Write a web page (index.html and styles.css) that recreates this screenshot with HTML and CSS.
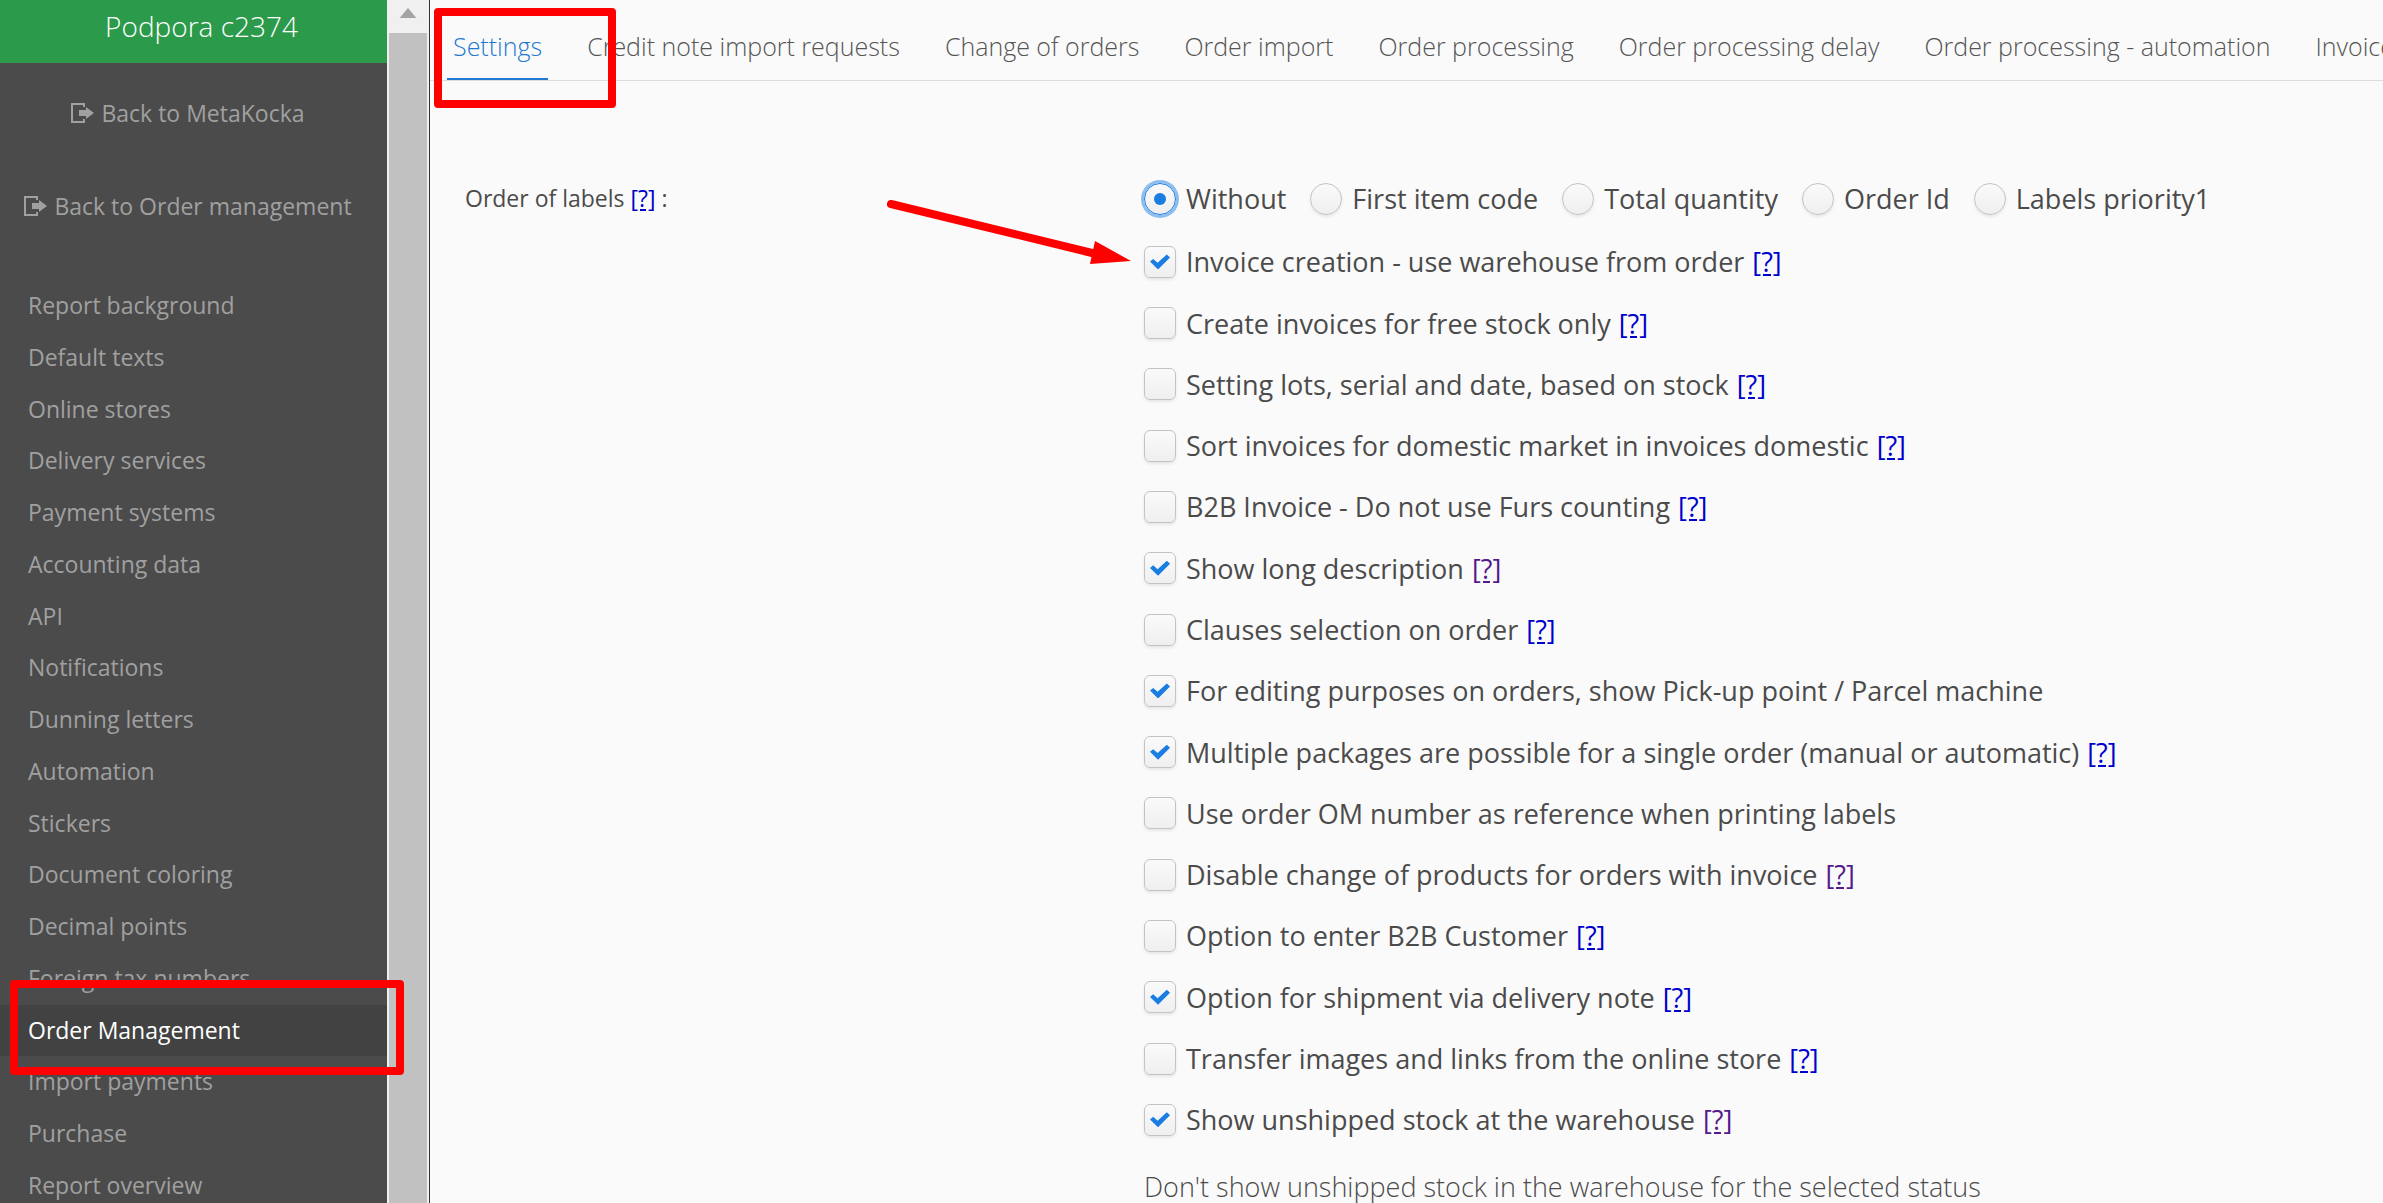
FILE: index.html
```
<!DOCTYPE html>
<html lang="en">
<head>
  <meta charset="UTF-8" />
  <meta name="viewport" content="width=device-width, initial-scale=1.0"/>
  <title>Order Management - Settings</title>
  <link rel="stylesheet" href="styles.css">
</head>
<body>
  <svg class="symbols" width="0" height="0">
    <symbol id="exit" viewBox="0 0 24 22">
      <path d="M14 5V2H2v18h12v-3" fill="none" stroke="currentColor" stroke-width="2"/>
      <path d="M9 8h7V5l8 6-8 6v-3H9z" fill="currentColor"/>
    </symbol>
  </svg>

  <!-- Sidebar -->
  <aside class="sidebar">
    <div class="account">Podpora c2374</div>
    <a class="back" href="#"><svg class="exit-icon"><use href="#exit"/></svg>Back to MetaKocka</a>
    <a class="back" href="#"><svg class="exit-icon"><use href="#exit"/></svg>Back to Order management</a>
    <nav class="menu">
      <a href="#">Report background</a>
      <a href="#">Default texts</a>
      <a href="#">Online stores</a>
      <a href="#">Delivery services</a>
      <a href="#">Payment systems</a>
      <a href="#">Accounting data</a>
      <a href="#">API</a>
      <a href="#">Notifications</a>
      <a href="#">Dunning letters</a>
      <a href="#">Automation</a>
      <a href="#">Stickers</a>
      <a href="#">Document coloring</a>
      <a href="#">Decimal points</a>
      <a href="#">Foreign tax numbers</a>
      <a href="#" class="active">Order Management</a>
      <a href="#">Import payments</a>
      <a href="#">Purchase</a>
      <a href="#">Report overview</a>
    </nav>
    <div class="mark mark-menu"></div>
  </aside>

  <div class="scrollbar">
    <svg class="scroll-up" viewBox="0 0 20 12"><path d="M0 12L10 0l10 12z" fill="#a3a3a3"/></svg>
    <div class="scroll-thumb"></div>
  </div>

  <!-- Content -->
  <main class="content">
    <nav class="tabs">
      <a href="#" class="active">Settings</a>
      <a href="#">Credit note import requests</a>
      <a href="#">Change of orders</a>
      <a href="#">Order import</a>
      <a href="#">Order processing</a>
      <a href="#">Order processing delay</a>
      <a href="#">Order processing - automation</a>
      <a href="#">Invoices</a>
    </nav>
    <div class="mark mark-tab"></div>

    <form class="form">
      <div class="caption">Order of labels <a href="#">[?]</a> :</div>
      <div class="fields">
        <div class="radios">
          <label><input type="radio" name="labels" class="focused" checked>Without</label>
          <label><input type="radio" name="labels">First item code</label>
          <label><input type="radio" name="labels">Total quantity</label>
          <label><input type="radio" name="labels">Order Id</label>
          <label><input type="radio" name="labels">Labels priority1</label>
        </div>
        <div class="check">
          <label><input type="checkbox" checked>Invoice creation - use warehouse from order</label>
          <a href="#">[?]</a>
          <svg class="arrow" viewBox="0 0 250 70">
            <path d="M9 9L210 58" stroke="#f00" stroke-width="8" stroke-linecap="round"/>
            <path d="M213 46l36 20-41 3z" fill="#f00"/>
          </svg>
        </div>
        <div class="check"><label><input type="checkbox">Create invoices for free stock only</label> <a href="#">[?]</a></div>
        <div class="check"><label><input type="checkbox">Setting lots, serial and date, based on stock</label> <a href="#">[?]</a></div>
        <div class="check"><label><input type="checkbox">Sort invoices for domestic market in invoices domestic</label> <a href="#">[?]</a></div>
        <div class="check"><label><input type="checkbox">B2B Invoice - Do not use Furs counting</label> <a href="#">[?]</a></div>
        <div class="check"><label><input type="checkbox" checked>Show long description</label> <a href="#" class="seen">[?]</a></div>
        <div class="check"><label><input type="checkbox">Clauses selection on order</label> <a href="#">[?]</a></div>
        <div class="check"><label><input type="checkbox" checked>For editing purposes on orders, show Pick-up point / Parcel machine</label></div>
        <div class="check"><label><input type="checkbox" checked>Multiple packages are possible for a single order (manual or automatic)</label> <a href="#">[?]</a></div>
        <div class="check"><label><input type="checkbox">Use order OM number as reference when printing labels</label></div>
        <div class="check"><label><input type="checkbox">Disable change of products for orders with invoice</label> <a href="#" class="seen">[?]</a></div>
        <div class="check"><label><input type="checkbox">Option to enter B2B Customer</label> <a href="#">[?]</a></div>
        <div class="check"><label><input type="checkbox" checked>Option for shipment via delivery note</label> <a href="#">[?]</a></div>
        <div class="check"><label><input type="checkbox">Transfer images and links from the online store</label> <a href="#">[?]</a></div>
        <div class="check"><label><input type="checkbox" checked>Show unshipped stock at the warehouse</label> <a href="#" class="seen">[?]</a></div>
        <p class="note">Don't show unshipped stock in the warehouse for the selected status</p>
      </div>
    </form>
  </main>
</body>
</html>
```
FILE: styles.css
```
* {
  box-sizing: border-box;
}

body {
  margin: 0;
  height: 100vh;
  display: flex;
  overflow: hidden;
  font-family: "Open Sans", sans-serif;
  font-size: 23px;
  color: #4b4b4b;
  background: #fafafa;
}

.symbols {
  position: absolute;
}

/* Sidebar */
.sidebar {
  position: relative;
  flex: 0 0 387px;
  height: 100%;
  background: #4b4b4b;
}

.account {
  height: 63px;
  padding-left: 16px;
  line-height: 53px;
  text-align: center;
  font-size: 28px;
  font-weight: 300;
  color: #fff;
  background: #2b9a4b;
}

.sidebar a {
  color: #a0a0a0;
  text-decoration: none;
}

.back {
  display: flex;
  align-items: center;
  justify-content: center;
  gap: 7px;
  height: 93px;
  padding: 6px 12px 0 0;
}

.exit-icon {
  width: 24px;
  height: 22px;
}

.menu {
  display: flex;
  flex-direction: column;
  padding-top: 31px;
}

.menu a {
  padding-left: 28px;
  line-height: 2.25;
}

.sidebar .active {
  color: #fff;
  background: #424242;
}

/* Scrollbar */
.scrollbar {
  flex: 0 0 43px;
  display: flex;
  flex-direction: column;
  align-items: center;
  height: 100%;
  background: #f0f0f0;
  border-right: 1px solid #333;
}

.scroll-up {
  width: 20px;
  height: 10px;
  margin: 8px 0 15px;
}

.scroll-thumb {
  flex: 1;
  width: 38px;
  background: #c1c1c1;
}

/* Content */
.content {
  position: relative;
  flex: 1;
  min-width: 0;
}

.tabs {
  display: flex;
  gap: 33px;
  height: 81px;
  padding-left: 17px;
  overflow: hidden;
  border-bottom: 1px solid #ddd;
}

.tabs a {
  height: 81px;
  padding: 0 6px;
  line-height: 93px;
  white-space: nowrap;
  font-size: 25px;
  font-weight: 300;
  color: #555;
  text-decoration: none;
}

.tabs .active {
  color: #2378d0;
  border-bottom: 3px solid #2378d0;
}

.form {
  display: grid;
  grid-template-columns: 679px 1fr;
  padding: 87px 0 0 35px;
}

.caption {
  line-height: 60px;
}

.form a {
  color: #00c;
}

.form .seen {
  color: #551a8b;
}

.fields {
  font-size: 27px;
  line-height: 2.27;
  white-space: nowrap;
}

.radios {
  display: flex;
  gap: 24px;
  margin-bottom: 2px;
}

label {
  display: flex;
  align-items: center;
  gap: 10px;
}

input {
  appearance: none;
  flex: none;
  display: grid;
  place-items: center;
  width: 32px;
  height: 32px;
  margin: 0;
  border: 1px solid #c3c3c3;
  border-radius: 6px;
  background: linear-gradient(#fafafa, #efefef);
  box-shadow: 0 2px 3px rgba(0,0,0,0.08);
}

input[type="radio"] {
  border-radius: 50%;
}

input[type="radio"]:checked::after {
  content: "";
  width: 12px;
  height: 12px;
  border-radius: 50%;
  background: #197de1;
}

.focused {
  border-color: #197de1;
  box-shadow: 0 0 0 3px #8cbdee;
}

input[type="checkbox"]:checked::after {
  content: "";
  width: 20px;
  height: 15px;
  background: #197de1;
  clip-path: polygon(0 48%, 16% 30%, 38% 56%, 84% 0, 100% 20%, 40% 100%);
}

.check {
  position: relative;
  display: flex;
  align-items: center;
  gap: 8px;
}

.note {
  margin: 5px 0 0;
  font-weight: 300;
}

/* Red highlights */
.mark {
  position: absolute;
  border: 8px solid #f00;
  border-radius: 4px;
}

.mark-menu {
  left: 10px;
  top: 980px;
  width: 394px;
  height: 95px;
  z-index: 1;
}

.mark-tab {
  left: 4px;
  top: 8px;
  width: 182px;
  height: 100px;
}

.arrow {
  position: absolute;
  right: 100%;
  bottom: 28px;
  width: 250px;
  height: 70px;
  margin-right: 12px;
  fill: none;
}
```
